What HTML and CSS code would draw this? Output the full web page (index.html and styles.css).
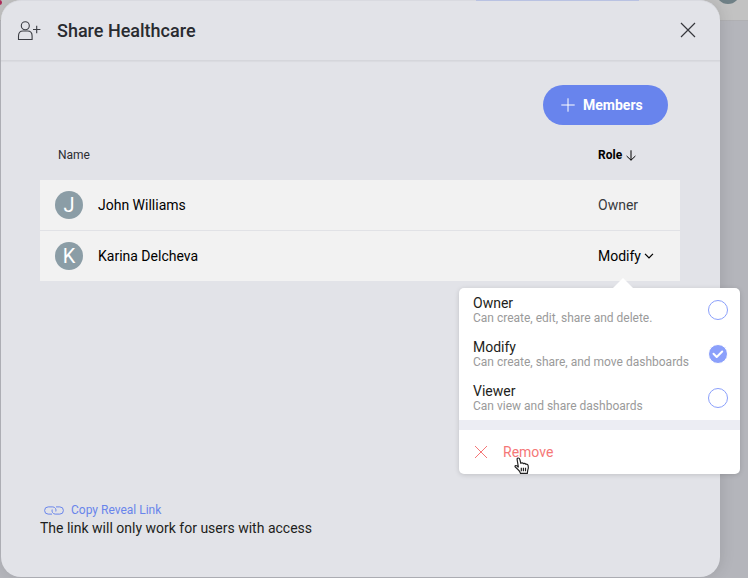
FILE: index.html
```html
<!DOCTYPE html>
<html lang="en">
<head>
<meta charset="utf-8">
<title>Share Healthcare</title>
<link rel="stylesheet" href="styles.css">
</head>
<body>
<div class="backdrop-bar"><span class="backdrop-mark"></span><span class="backdrop-strip"></span><span class="backdrop-avatar"></span></div>
<section class="dialog">
  <header class="dialog-header">
    <svg class="user-icon" width="24" height="20" viewBox="0 0 24 20"><circle cx="8.3" cy="4.8" r="4"/><path d="M1.5 18.5V15q0-5 4.5-5h4.6q4.5 0 4.5 5v3.5ZM16 8.5h7.4M19.7 4.8v7.4"/></svg>
    <h1>Share Healthcare</h1>
    <svg class="close-icon" width="16" height="16" viewBox="0 0 16 16"><path d="M1 1l14 14M15 1L1 15"/></svg>
  </header>
  <main class="dialog-body">
    <button class="members"><svg width="14" height="14" viewBox="0 0 14 14"><path d="M7 .3v13.4M.3 7h13.4"/></svg><span>Members</span></button>
    <div class="columns"><span>Name</span><span class="role-head">Role<svg width="10" height="11" viewBox="0 0 10 11"><path d="M5 .3v10M.6 6L5 10.2 9.4 6"/></svg></span></div>
    <div class="row"><span class="avatar">J</span><span class="person">John Williams</span><span class="role">Owner</span></div>
    <div class="row"><span class="avatar">K</span><span class="person">Karina Delcheva</span><span class="role active">Modify<svg width="10" height="6" viewBox="0 0 10 6"><path d="M1 .8l4 4 4-4"/></svg></span></div>
  </main>
  <footer class="dialog-footer">
    <a class="copy"><svg width="20" height="9" viewBox="0 0 20 9"><path d="M8 8.1H4.2a3.6 3.6 0 0 1 0-7.2h4.6a3.4 3.4 0 0 1 3 4.6M12 .9h3.8a3.6 3.6 0 0 1 0 7.2h-4.6a3.4 3.4 0 0 1-3-4.6"/></svg><span>Copy Reveal Link</span></a>
    <p>The link will only work for users with access</p>
  </footer>
</section>
<div class="menu">
  <div class="option"><div><b>Owner</b><small>Can create, edit, share and delete.</small></div><span class="radio"></span></div>
  <div class="option"><div><b>Modify</b><small>Can create, share, and move dashboards</small></div><span class="radio checked"><svg width="12" height="9" viewBox="0 0 12 9"><path d="M1.5 3.8l3.2 3.2L10.2 1.5"/></svg></span></div>
  <div class="option"><div><b>Viewer</b><small>Can view and share dashboards</small></div><span class="radio"></span></div>
  <div class="divider"></div>
  <div class="remove"><svg width="14" height="14" viewBox="0 0 14 14"><path d="M1 1l12 12M13 1L1 13"/></svg><span>Remove</span></div>
</div>
<svg class="cursor" width="16" height="18" viewBox="0 0 16 18"><path d="M4.4 10.4L3.2 3Q2.8 1.2 4.1 1t1.8 1.6l.9 3.6q1.9-.8 2.5.4 1.9-.6 2.4.6 2-.3 2.4 1.2.6 2.4-.3 4.6l-.5 3.3H6.5q-.6-2-2.3-3.5L1.2 9.9Q.6 8.7 1.8 8.5t2.6 1.9Z"/><path d="M7.3 10.7v3.5M9.4 10.7v3.5M11.5 10.7v3.5"/></svg>
</body>
</html>
```
FILE: styles.css
```css
* { box-sizing: border-box; }
body { margin: 0; width: 748px; height: 578px; overflow: hidden; position: relative; background: #b4b5bb; font-family: Roboto, sans-serif; color: #000; }
svg { display: block; fill: none; stroke: currentColor; flex: none; }
.backdrop-bar { position: absolute; inset: 0 0 auto; height: 21px; background: #c2c2c2; border-bottom: 1px solid #b0b0b3; overflow: hidden; }
.backdrop-mark { position: absolute; left: -3px; top: 0; width: 5px; height: 5px; border-radius: 50%; background: #ae2b59; }
.backdrop-strip { position: absolute; z-index: 1; left: 476px; top: 0; width: 163px; height: 1px; background: #b9c2e2; }
.backdrop-avatar { position: absolute; left: 716px; top: -20px; width: 24px; height: 24px; border-radius: 50%; background: #6f8086; }
.dialog { width: 719px; height: 577px; position: relative; margin-left: 1px; display: flex; flex-direction: column; background: #e2e3e8; border-radius: 20px; box-shadow: 2px 0 14px #0000001a; border-top: 1px solid #d9dae0; }
.dialog-header { height: 60px; display: flex; align-items: center; padding: 0 24px 1px 16px; border-bottom: 1px solid #d5d6db; box-shadow: 0 1px 1px #00000008; }
.user-icon { color: #3b3d43; stroke-width: 1.1; margin: 2px 16px 0 0; }
h1 { margin: 0; flex: 1; font-size: 18px; line-height: 24px; font-weight: 500; color: #292b30; position: relative; top: 1px; }
.close-icon { color: #36373c; stroke-width: 1.2; }
.dialog-body { padding: 24px 40px 0 39px; display: flex; flex-direction: column; }
.members { align-self: flex-end; margin-right: 12px; width: 125px; height: 40px; border: 0; border-radius: 20px; background: #6884ed; color: #fff; font: 700 14px/20px Roboto, sans-serif; display: flex; align-items: center; padding: 0 0 0 18px; gap: 8px; }
.columns { height: 55px; padding: 20px 0 0 18px; display: flex; align-items: flex-start; font-size: 12px; line-height: 20px; color: #2b2d32; }
.columns > :first-child { width: 540px; }
.role-head { display: flex; align-items: center; gap: 4px; font-weight: 700; color: #000; }
.row { height: 50px; display: flex; align-items: center; padding-left: 15px; background: #f2f2f2; font-size: 14px; }
.row + .row { height: 51px; border-top: 1px solid #e1e2e6; }
.avatar { width: 28px; height: 28px; border-radius: 50%; background: #8b9da6; color: #fff; font-size: 20px; line-height: 29px; text-align: center; }
.person { width: 500px; margin-left: 15px; }
.role { color: #383a3e; }
.role.active { color: #000; display: flex; align-items: center; gap: 3px; }
.role.active svg { stroke-width: 1.2; }
.dialog-footer { margin: auto 0 40px 39px; }
.copy { display: flex; align-items: center; gap: 7px; margin-left: 4px; color: #6985eb; font-size: 12px; line-height: 18px; }
p { margin: 0; font-size: 14px; line-height: 18px; color: #1d1e20; }
.menu { position: absolute; left: 459px; top: 288px; width: 281px; height: 186px; background: #fff; border-radius: 5px; box-shadow: 0 1px 5px #00000026; }
.menu::before { content: ""; position: absolute; left: 154px; top: -10px; width: 20px; height: 10px; background: #fff; clip-path: polygon(50% 0, 100% 100%, 0 100%); }
.option { height: 44px; padding: 0 12px 0 14px; display: flex; align-items: center; justify-content: space-between; }
.option b, .option small { display: block; white-space: nowrap; }
.option b { font-size: 14px; font-weight: 400; line-height: 16px; color: #1d1e20; }
.option small { font-size: 12px; line-height: 14px; color: #9a9a9a; }
.radio { width: 20px; height: 20px; border: 1px solid #8ba0fb; border-radius: 50%; display: grid; place-items: center; }
.checked { background: #8ba0fb; color: #fff; border: 1px solid #fff; }
.checked svg { stroke-width: 2; stroke-linecap: round; stroke-linejoin: round; }
.divider { height: 10px; background: #ecedf3; }
.remove { height: 44px; padding-left: 15px; display: flex; align-items: center; gap: 15px; color: #f57777; font-size: 14px; }
.cursor { position: absolute; left: 514px; top: 457px; color: #222; fill: #fff; stroke-width: 1.2; }
```
